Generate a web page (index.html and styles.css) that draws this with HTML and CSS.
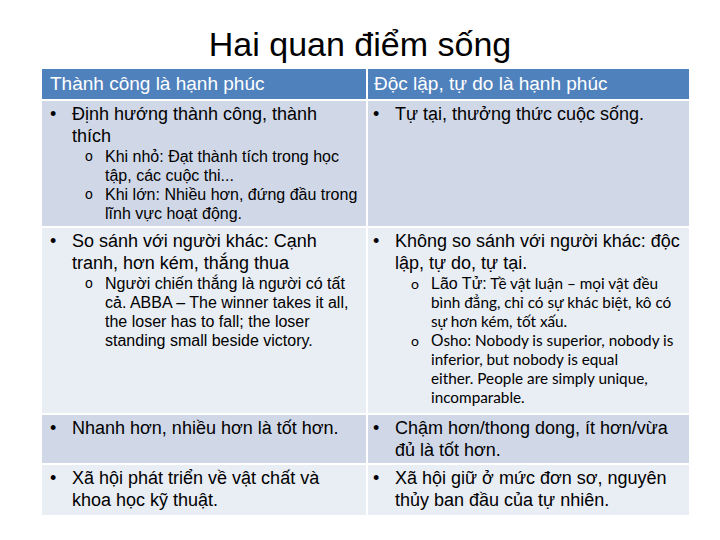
FILE: index.html
```html
<!DOCTYPE html>
<html lang="vi">
<head>
<meta charset="utf-8">
<title>Hai quan điểm sống</title>
<link rel="stylesheet" href="styles.css">
</head>
<body>
<h1 class="title">Hai quan điểm sống</h1>
<div class="table">
  <div class="cell head">Thành công là hạnh phúc</div>
  <div class="cell head r">Độc lập, tự do là hạnh phúc</div>

  <div class="cell odd">
    <div class="item">Định hướng thành công, thành<br>thích</div>
    <div class="sub">Khi nhỏ: Đạt thành tích trong học<br>tập, các cuộc thi...</div>
    <div class="sub">Khi lớn: Nhiều hơn, đứng đầu trong<br>lĩnh vực hoạt động.</div>
  </div>
  <div class="cell odd r">
    <div class="item">Tự tại, thưởng thức cuộc sống.</div>
  </div>

  <div class="cell even">
    <div class="item">So sánh với người khác: Cạnh<br>tranh, hơn kém, thắng thua</div>
    <div class="sub">Người chiến thắng là người có tất<br>cả. ABBA – The winner takes it all,<br>the loser has to fall; the loser<br>standing small beside victory.</div>
  </div>
  <div class="cell even r">
    <div class="item">Không so sánh với người khác: độc<br>lập, tự do, tự tại.</div>
    <div class="sub alt"><span class="lead">Lão Tử:</span> Tề vật luận – mọi vật đều<br>bình đẳng, chỉ có sự khác biệt, kô có<br>sự hơn kém, tốt xấu.</div>
    <div class="sub alt"><span class="lead">O</span>sho: Nobody is superior, nobody is<br>inferior, but nobody is equal<br>either. People are simply unique,<br>incomparable.</div>
  </div>

  <div class="cell odd">
    <div class="item">Nhanh hơn, nhiều hơn là tốt hơn.</div>
  </div>
  <div class="cell odd r">
    <div class="item">Chậm hơn/thong dong, ít hơn/vừa<br>đủ là tốt hơn.</div>
  </div>

  <div class="cell even">
    <div class="item">Xã hội phát triển về vật chất và<br>khoa học kỹ thuật.</div>
  </div>
  <div class="cell even r">
    <div class="item">Xã hội giữ ở mức đơn sơ, nguyên<br>thủy ban đầu của tự nhiên.</div>
  </div>
</div>
</body>
</html>
```

FILE: styles.css
```css
html, body {
  margin: 0;
  padding: 0;
  background: #ffffff;
}
body {
  font-family: "Liberation Sans", Arial, sans-serif;
  color: #000000;
}
.title {
  margin: 24px 0 5px 0;
  height: 40px;
  line-height: 40px;
  font-size: 34px;
  font-weight: normal;
  text-align: center;
  color: #000000;
}
.table {
  margin-left: 42px;
  width: 647px;
  display: grid;
  grid-template-columns: 324px 321px;
  grid-template-rows: 30px 125px 185px 48px 50px;
  column-gap: 2px;
  row-gap: 2px;
}
.cell {
  padding: 1px 4px 0 8px;
  white-space: nowrap;
  overflow: hidden;
}
.cell.r {
  padding-left: 5px;
}
.head {
  background: #4f81bd;
  color: #ffffff;
  font-size: 19px;
  line-height: 30px;
  padding-top: 0;
}
.cell.head.r {
  padding-left: 6px;
}
.odd {
  background: #d0d8e8;
}
.even {
  background: #e9edf4;
}
.even, .odd {
  padding-top: 2px;
}
.item {
  position: relative;
  padding-left: 22px;
  font-size: 18px;
  line-height: 22px;
}
.item::before {
  content: "•";
  position: absolute;
  left: 0;
  top: 0;
}
.sub {
  position: relative;
  margin-left: 55px;
  font-size: 16px;
  line-height: 19px;
}
.r .sub {
  margin-left: 58px;
}
.sub::before {
  content: "o";
  position: absolute;
  left: -20px;
  top: 0;
  font-size: 14px;
}
.alt {
  font-family: "Lato", "Liberation Sans", sans-serif;
  font-size: 15.3px;
}
.alt .lead {
  font-family: "Liberation Sans", Arial, sans-serif;
  font-size: 16px;
}
```
